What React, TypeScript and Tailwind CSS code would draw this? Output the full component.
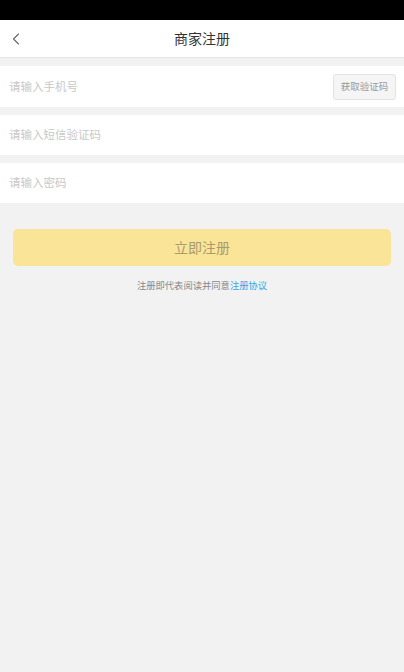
import { ChevronLeft } from "lucide-react"

const FONT = { fontFamily: '"Noto Sans CJK SC", "Noto Sans", sans-serif' }

export default function App() {
  return (
    <div className="flex min-h-[672px] w-full flex-col bg-[#f2f2f2]" style={FONT}>
      {/* Status bar */}
      <div className="h-[20px] bg-black" />

      {/* Header */}
      <div className="relative flex h-[38px] items-center justify-center border-b border-[#e6e6e6] bg-white">
        <ChevronLeft size={20} strokeWidth={1.3} className="absolute left-[6px] text-[#666]" />
        <h1 className="text-[14px] text-[#333]">商家注册</h1>
      </div>

      {/* Form */}
      <div className="mt-[8px] flex flex-col gap-[8px]">
        <div className="flex h-[41px] items-center justify-between bg-white pl-[9px] pr-[8px]">
          <span className="text-[11.5px] text-[#c8c8c8]">请输入手机号</span>
          <button
            type="button"
            className="h-[26px] w-[63px] rounded-[3px] border border-[#e3e3e3] bg-[#f5f5f5] text-[9.5px] text-[#999]"
          >
            获取验证码
          </button>
        </div>
        <div className="flex h-[40px] items-center bg-white px-[9px]">
          <span className="text-[11.5px] text-[#c8c8c8]">请输入短信验证码</span>
        </div>
        <div className="flex h-[40px] items-center bg-white px-[9px]">
          <span className="text-[11.5px] text-[#c8c8c8]">请输入密码</span>
        </div>
      </div>

      {/* Submit */}
      <div className="mt-[26px] px-[13px]">
        <button
          type="button"
          className="h-[37px] w-full rounded-[5px] bg-[#f9e498] text-[14px] text-[#a89b6d]"
        >
          立即注册
        </button>
      </div>

      <p className="mt-[13px] text-center text-[9.3px] text-[#888]">
        注册即代表阅读并同意<span className="text-[#3ba3e8]">注册协议</span>
      </p>
    </div>
  )
}
